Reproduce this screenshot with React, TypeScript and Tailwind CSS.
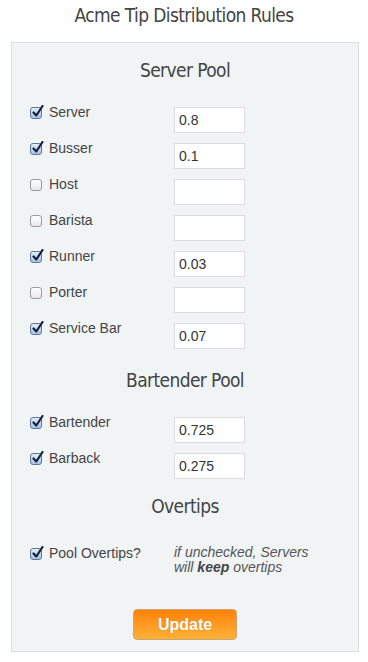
const heading = "text-center text-[19px] leading-[28px] tracking-[-0.6px] text-[#444]"
const headingFont = { fontFamily: '"Liberation Sans Narrow", "DejaVu Sans Condensed", sans-serif' }

const Check = ({ checked }: { checked: boolean }) =>
  checked ? (
    <span className="relative mt-[3px] block h-[12px] w-[12px] shrink-0 rounded-[3px] border border-[#5f7799] bg-gradient-to-b from-[#e3edf9] to-[#a7c3e8]">
      <svg className="absolute -top-[3px] left-[1px]" width="12" height="13" viewBox="0 0 12 13">
        <path d="M1.5 7.5 L4.3 10.5 L10.5 1" fill="none" stroke="#15223d" strokeWidth="2.2" strokeLinecap="round" strokeLinejoin="round" />
      </svg>
    </span>
  ) : (
    <span className="mt-[3px] block h-[12px] w-[12px] shrink-0 rounded-[3px] border border-[#9b9b9b] bg-gradient-to-b from-white to-[#e8e8e8]" />
  )

const Row = ({ label, checked, value }: { label: string; checked: boolean; value: string }) => (
  <div className="flex h-[36px] items-start">
    <div className="flex w-[144px] items-start gap-[7px]">
      <Check checked={checked} />
      <span className="text-[14px] leading-[16px] text-[#444]">{label}</span>
    </div>
    <div className="mt-[3px] h-[26px] w-[71px] border border-[#dcdcdc] bg-white pl-[4px] text-[14px] leading-[24px] text-[#333]">
      {value}
    </div>
  </div>
)

const App = () => (
  <div className="h-[662px] w-[368px] bg-white" style={{ fontFamily: '"Liberation Sans", Arial, sans-serif' }}>
    <h1 className="text-center text-[19px] leading-[30px] tracking-[-0.6px] text-[#444]" style={headingFont}>
      Acme Tip Distribution Rules
    </h1>
    <div className="ml-[11px] mt-[12px] w-[348px] border border-[#dcdfe0] bg-[#f0f4f5] pb-[11px] pt-[13px]">
      <h2 className={heading} style={headingFont}>Server Pool</h2>
      <div className="mt-[20px] pl-[18px]">
        <Row label="Server" checked value="0.8" />
        <Row label="Busser" checked value="0.1" />
        <Row label="Host" checked={false} value="" />
        <Row label="Barista" checked={false} value="" />
        <Row label="Runner" checked value="0.03" />
        <Row label="Porter" checked={false} value="" />
        <Row label="Service Bar" checked value="0.07" />
      </div>
      <h2 className={`${heading} mt-[10px]`} style={headingFont}>Bartender Pool</h2>
      <div className="mt-[20px] pl-[18px]">
        <Row label="Bartender" checked value="0.725" />
        <Row label="Barback" checked value="0.275" />
      </div>
      <h2 className={`${heading} mt-[6px]`} style={headingFont}>Overtips</h2>
      <div className="mt-[25px] flex items-start pl-[18px]">
        <div className="flex w-[144px] items-start gap-[7px]">
          <Check checked />
          <span className="text-[14px] leading-[16px] text-[#444]">Pool Overtips?</span>
        </div>
        <p className="text-[14px] italic leading-[15px] text-[#555]">
          if unchecked, Servers
          <br />
          will <b className="text-[#444]">keep</b> overtips
        </p>
      </div>
      <div className="mt-[34px] flex justify-center">
        <button className="h-[31px] w-[104px] rounded-[4px] border border-[#c9a67a] bg-gradient-to-b from-[#ff8200] to-[#ffb036] text-[16px] font-bold text-white [text-shadow:0_0_1px_rgba(160,80,0,0.5)]">
          Update
        </button>
      </div>
    </div>
  </div>
)

export default App
